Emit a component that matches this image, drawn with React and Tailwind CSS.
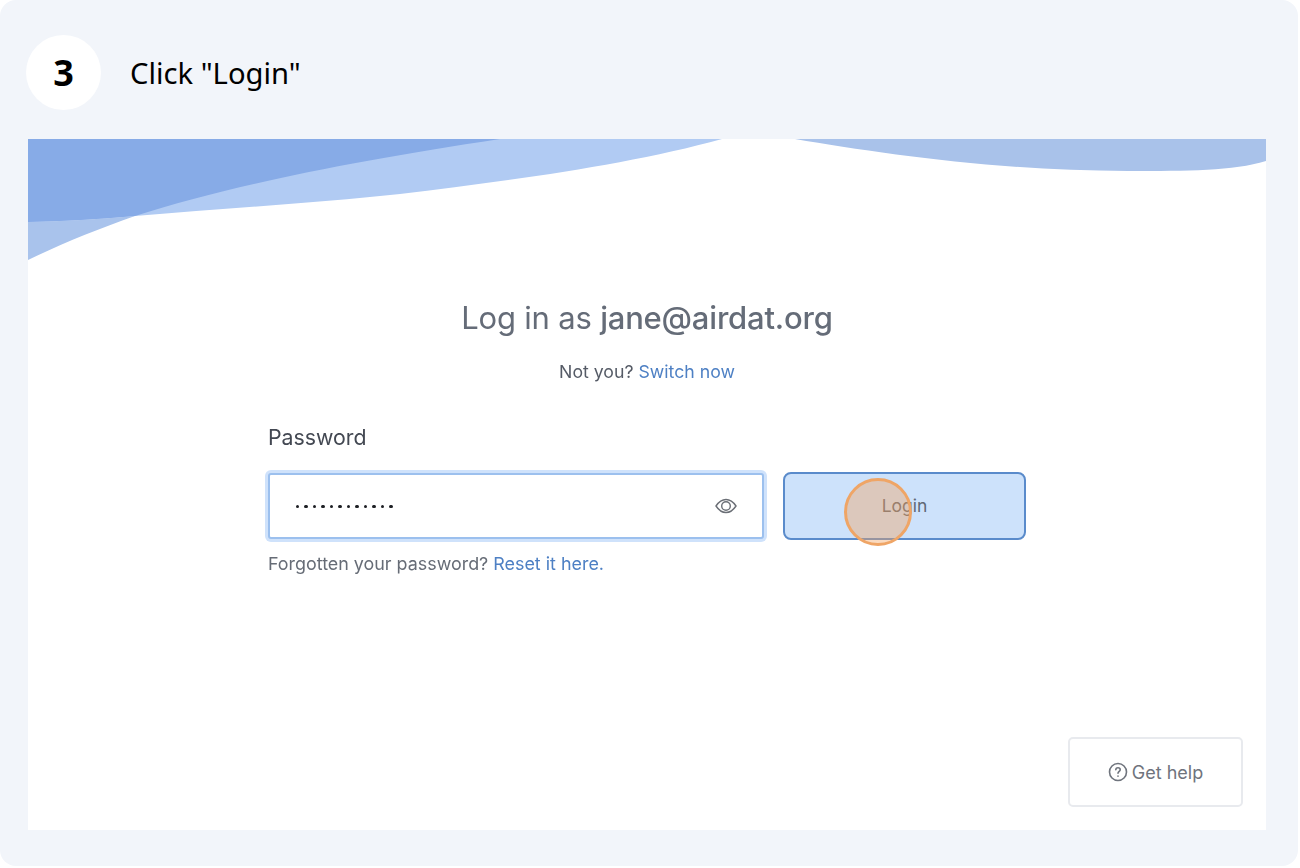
export default function App() {
  return (
    <div className="w-[1300px] h-[868px] bg-white overflow-hidden">
      <div className="w-[1298px] h-[866px] bg-[#f2f5fa] rounded-2xl flex flex-col pl-[28px] pr-[32px]">
        <div className="h-[139px] flex items-center shrink-0 -ml-[2px] pt-[6px]">
          <div className="w-[75px] h-[75px] rounded-full bg-white flex items-center justify-center text-[36px] font-bold text-black shrink-0 font-['Noto_Sans',sans-serif]">3</div>
          <div className="ml-[29px] mt-[2px] text-[29.200px] leading-none text-black font-['Noto_Sans',sans-serif]">Click "Login"</div>
        </div>
        <div className="relative w-[1238px] h-[691px] bg-white overflow-hidden font-['Inter',sans-serif]">
          <svg className="absolute left-0 top-0" width="1238" height="140" viewBox="0 0 1238 140">
            <path d="M0 0H694C600 26 480 42 372 55C290 64 200 69 107 77C70 80 35 82.500 0 83Z" fill="#b1cbf3" />
            <path d="M0 83C35 82.500 70 80 107 77C70 90 35 104 0 121Z" fill="#a9c3ec" />
            <path d="M0 0H472C320 23 200 47 107 77C70 80 35 82.500 0 83Z" fill="#87abe7" />
            <path d="M767 0C850 14 970 32 1100 32C1160 32 1205 32 1238 22V0Z" fill="#a9c2ea" />
          </svg>
          <div className="relative blur-[0.35px]">
            <div className="flex flex-col items-center pt-[159px]">
              <h1 className="text-[31px] leading-[40px] text-[#656c78] tracking-[-0.2px]">Log in as <span className="font-medium">jane@airdat.org</span></h1>
              <p className="mt-[22px] text-[17.700px] leading-[24px] text-[#555b66]">Not you? <span className="text-[#4e80c4]">Switch now</span></p>
            </div>
            <div className="ml-[240px] w-[760px] mt-[39px]">
              <div className="text-[21.300px] leading-[28px] text-[#434852]">Password</div>
              <div className="mt-[21px] flex items-center">
                <div className="relative w-[496px] h-[66px] bg-white border-2 border-[#9cc0ee] rounded-[3px] ring-[3px] ring-[#cfe2fb] flex items-center pl-[24.300px]">
                  <div className="flex gap-[2.500px] mt-[1px]">
                    {Array.from({ length: 12 }).map((_, i) => (
                      <span key={i} className="w-[6px] flex justify-center"><span className="block w-[3.500px] h-[3.500px] rounded-full bg-[#1d1f24]" /></span>
                    ))}
                  </div>
                  <svg className="absolute right-[25px] top-[21px]" width="22" height="20" viewBox="0 0 22 20" fill="none" stroke="#6b6f76" strokeWidth="1.400">
                    <path d="M1 10C4 5.500 7.200 3.500 11 3.500S18 5.500 21 10C18 14.500 14.800 16.500 11 16.500S4 14.500 1 10Z" />
                    <circle cx="11" cy="10" r="4.300" />
                  </svg>
                </div>
                <div className="relative ml-[19px] w-[243px] h-[68px] bg-[#cde2fb] border-2 border-[#5a8bcb] rounded-[8px] flex items-center justify-center text-[17.500px] text-[#5f6875]">
                  Login
                  <div className="absolute left-[59px] top-[4px] w-[68px] h-[68px] rounded-full border-[3px] border-[#efa566] bg-[#f2a25f]/40" />
                </div>
              </div>
              <p className="mt-[12px] text-[17.900px] leading-[24px] text-[#666c76]">Forgotten your password? <span className="text-[#4e80c4]">Reset it here.</span></p>
            </div>
            <div className="absolute left-[1040px] top-[598px] w-[175px] h-[70px] bg-white border-2 border-[#e8eaee] rounded-[5px] flex items-center justify-center gap-[4px] text-[18px] text-[#6f747d]">
              <svg width="20" height="20" viewBox="0 0 20 20" fill="none" stroke="#6f747d" strokeWidth="1.600" strokeLinecap="round">
                <circle cx="10" cy="10" r="8.500" />
                <path d="M7.800 7.800C7.800 6.500 8.800 5.700 10 5.700S12.200 6.500 12.200 7.700C12.200 9.300 10 9.300 10 11.200" />
                <path d="M10 14.100V14.200" />
              </svg>
              Get help
            </div>
          </div>
        </div>
      </div>
    </div>
  );
}
